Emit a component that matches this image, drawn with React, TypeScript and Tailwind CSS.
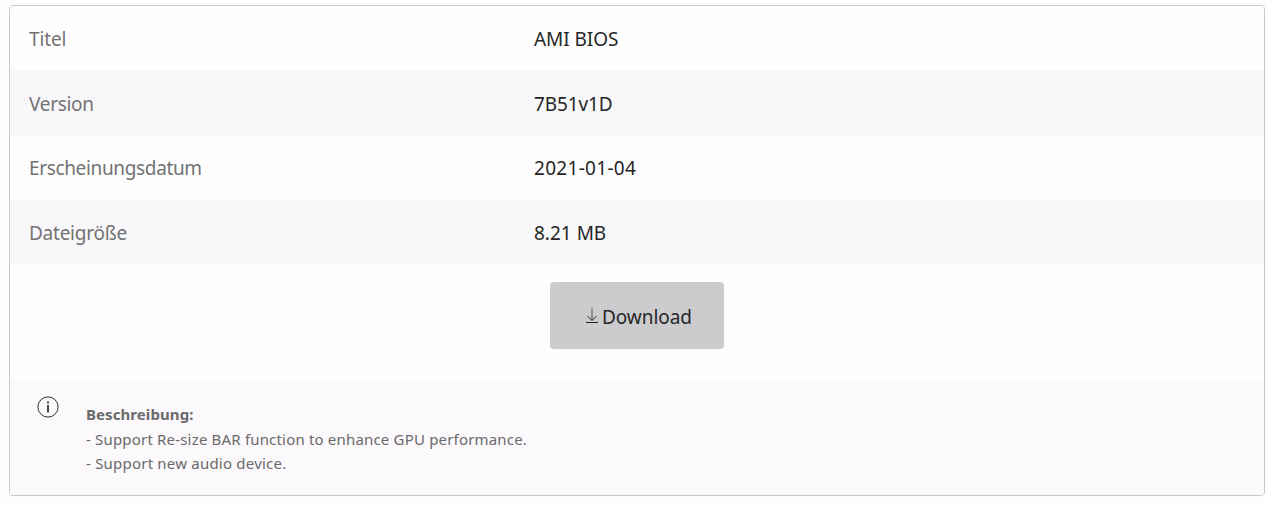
const rows = [
  { label: "Titel", value: "AMI BIOS", labelCls: "tracking-[-0.15px]", valueCls: "tracking-[-0.05px]", cls: "h-[64px] bg-[#fefefe] pt-[2px]" },
  { label: "Version", value: "7B51v1D", labelCls: "tracking-[-0.3px]", valueCls: "tracking-[-0.1px]", cls: "h-[66px] bg-[#f8f7f9] pt-[2px]" },
  { label: "Erscheinungsdatum", value: "2021-01-04", labelCls: "tracking-[-0.35px]", valueCls: "tracking-[0.3px]", cls: "h-[64px] bg-[#fefefe]" },
  { label: "Dateigröße", value: "8.21 MB", labelCls: "tracking-[-0.25px]", valueCls: "tracking-normal", cls: "h-[64px] bg-[#f8f7f9] pt-[2px]" },
];

export default function App() {
  return (
    <div className="h-[505px] bg-[#fefefe] pl-[9px] pt-[5px] pr-[2px] font-['Noto_Sans','Open_Sans',sans-serif]">
      <div className="h-[491px] overflow-hidden rounded border border-[#c8c8c8]">
        {rows.map((r) => (
          <div key={r.label} className={`flex items-center pl-[19px] text-[19px] ${r.cls}`}>
            <div className={`w-[505px] text-[#737373] ${r.labelCls}`}>{r.label}</div>
            <div className={`text-[#262626] ${r.valueCls}`}>{r.value}</div>
          </div>
        ))}
        <div className="flex h-[116px] justify-center pt-[18px]">
          <button className="flex h-[67px] w-[174px] items-center justify-center rounded bg-[#cccbcd] pl-[3px] text-[19px] tracking-[-0.05px] text-[#262626]">
            <svg className="mr-[3px]" width="14" height="16" viewBox="0 0 14 16" fill="none" stroke="currentColor">
              <path d="M7 0.5V12.5" stroke="#686868" strokeWidth="1.2" />
              <path d="M2.5 8L7 12.5L11.5 8" />
              <path d="M1 14.5H13" />
            </svg>
            <span className="pt-[3px]">Download</span>
          </button>
        </div>
        <div className="flex h-[115px] bg-[#fbf9fc] pl-[27px] pt-[16px]">
          <svg width="22" height="22" viewBox="0 0 22 22" fill="none" stroke="#333">
            <circle cx="11" cy="11" r="10.1" />
            <path d="M11 9v7.5M11 5.5v2" strokeWidth="1.8" />
          </svg>
          <div className="ml-[27px] mt-[6px] text-[15px] leading-[24.5px] text-[#6a6a6a]">
            <strong className="tracking-[0.08px]">Beschreibung:</strong>
            <p className="tracking-[0.18px]">- Support Re-size BAR function to enhance GPU performance.</p>
            <p className="tracking-[0.21px]">- Support new audio device.</p>
          </div>
        </div>
      </div>
    </div>
  );
}
